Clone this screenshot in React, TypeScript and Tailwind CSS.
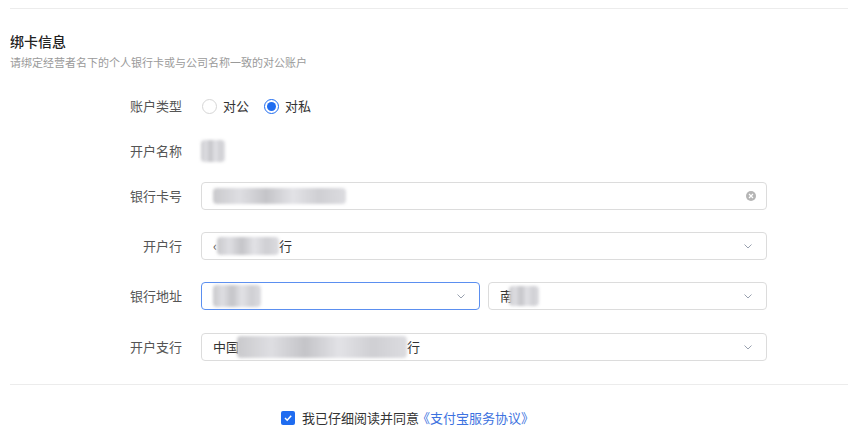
const font = { fontFamily: '"Noto Sans CJK SC", "Noto Sans", sans-serif' };

function Chevron() {
  return (
    <svg width="12" height="12" viewBox="0 0 12 12" className="text-gray-400">
      <path d="M2.5 4.5 L6 8 L9.5 4.5" fill="none" stroke="currentColor" strokeWidth="1" />
    </svg>
  );
}

function Blur({ w, h = 16, className = "" }: { w: number; h?: number; className?: string }) {
  return (
    <span
      className={"inline-block rounded-sm bg-[linear-gradient(90deg,#c9c9cc,#dedee2,#c4c4c8,#e2e2e6,#cfcfd3,#dcdce0)] blur-[1.5px] " + className}
      style={{ width: w, height: h }}
    />
  );
}

function Row({ label, children, className = "" }: { label: string; children: React.ReactNode; className?: string }) {
  return (
    <div className={"flex items-center h-[28px] " + className}>
      <div className="w-[201px] shrink-0 text-right pr-[19px] text-[13px] text-[#555]">{label}</div>
      <div className="flex-1 flex items-center">{children}</div>
    </div>
  );
}

function Select({ children, focus = false, className = "" }: { children?: React.ReactNode; focus?: boolean; className?: string }) {
  return (
    <div
      className={
        "h-[28px] flex items-center justify-between pl-[11px] pr-[12px] rounded-[4px] border bg-white " +
        (focus ? "border-[#5b8ff0] " : "border-[#dcdcdc] ") +
        className
      }
    >
      <div className="flex items-center text-[13px] text-[#333]">{children}</div>
      <Chevron />
    </div>
  );
}

export default function App() {
  return (
    <div className="w-[848px] h-[439px] bg-white overflow-hidden" style={font}>
      <div className="mt-[8px] ml-[10px] border-t border-[#ececec]" />
      <div className="pl-[10px] pt-[22px]">
        <div className="text-[14px] font-medium text-[#222] leading-[20px]">绑卡信息</div>
        <div className="text-[11px] text-[#9a9a9a] leading-[16px] mt-[3px]">请绑定经营者名下的个人银行卡或与公司名称一致的对公账户</div>
      </div>

      <div className="flex flex-col w-[767px] mt-[22px]">
        <Row label="账户类型">
          <label className="flex items-center ml-[1px]">
            <span className="w-[15px] h-[15px] rounded-full border border-[#d6d6d6] bg-white" />
            <span className="ml-[6px] text-[13px] text-[#333]">对公</span>
          </label>
          <label className="flex items-center ml-[15px]">
            <span className="w-[15px] h-[15px] rounded-full border border-[#1f6cf0] flex items-center justify-center">
              <span className="w-[9px] h-[9px] rounded-full bg-[#1f6cf0]" />
            </span>
            <span className="ml-[6px] text-[13px] text-[#333]">对私</span>
          </label>
        </Row>

        <Row label="开户名称" className="mt-[17px]">
          <Blur w={24} h={22} className="rounded-[6px]" />
        </Row>

        <Row label="银行卡号" className="mt-[17px]">
          <div className="flex-1 h-[28px] flex items-center justify-between pl-[11px] pr-[10px] rounded-[4px] border border-[#dcdcdc]">
            <Blur w={133} h={16} />
            <span className="w-[10px] h-[10px] rounded-full bg-[#b5b5b5] flex items-center justify-center">
              <svg width="6" height="6" viewBox="0 0 6 6">
                <path d="M1 1 L5 5 M5 1 L1 5" stroke="#fff" strokeWidth="1.2" />
              </svg>
            </span>
          </div>
        </Row>

        <Row label="开户行" className="mt-[22px]">
          <Select className="flex-1">
            <span className="text-[#555]">‹</span>
            <Blur w={62} h={18} />
            <span>行</span>
          </Select>
        </Row>

        <Row label="银行地址" className="mt-[22px]">
          <Select focus className="w-[279px]">
            <Blur w={48} h={22} />
          </Select>
          <Select className="flex-1 ml-[8px]">
            <span>南</span>
            <Blur w={30} h={20} className="-ml-[4px]" />
          </Select>
        </Row>

        <Row label="开户支行" className="mt-[23px]">
          <Select className="flex-1">
            <span>中国</span>
            <Blur w={170} h={22} className="-ml-[2px]" />
            <span>行</span>
          </Select>
        </Row>
      </div>

      <div className="mt-[23px] ml-[10px] border-t border-[#ececec]" />

      <div className="flex items-center mt-[23px] ml-[281px]">
        <span className="w-[14px] h-[14px] rounded-[2px] bg-[#1f6cf0] flex items-center justify-center">
          <svg width="10" height="10" viewBox="0 0 10 10">
            <path d="M2 5 L4.2 7.2 L8.2 2.8" fill="none" stroke="#fff" strokeWidth="1.5" />
          </svg>
        </span>
        <span className="ml-[7px] text-[13px] text-[#333]">我已仔细阅读并同意</span>
        <span className="text-[13px] text-[#3d72e0] -ml-[2px]">《支付宝服务协议》</span>
      </div>
    </div>
  );
}
